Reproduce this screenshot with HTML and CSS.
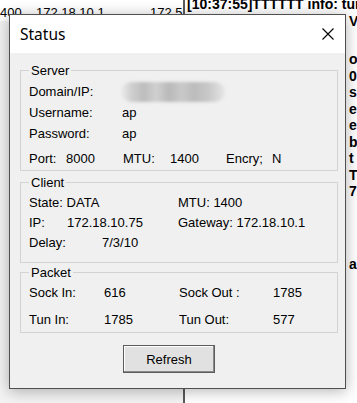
FILE: index.html
```html
<!DOCTYPE html>
<html lang="en">
  <head>
    <meta charset="UTF-8" />
    <title>Status</title>
    <link rel="stylesheet" href="styles.css">
  </head>
  <body>
    <div class="desktop">
      <div class="list-pane">
        <div class="list-row">
          <span class="col-mtu">400</span>
          <span class="col-gw">172.18.10.1</span>
          <span class="col-ip">172.5</span>
        </div>
      </div>

      <div class="log-pane">
        <div class="log-line">[10:37:55]TTTTTT info: tunnel up</div>
        <div class="log-line"><span class="log-text">[10:50:24]: connect</span><span class="log-end">V</span></div>
        <div class="log-line gap-top"><span class="log-text"></span><span class="log-end">&nbsp;</span></div>
        <div class="log-line"><span class="log-text"></span><span class="log-end">o</span></div>
        <div class="log-line"><span class="log-text"></span><span class="log-end">0</span></div>
        <div class="log-line"><span class="log-text"></span><span class="log-end">s</span></div>
        <div class="log-line"><span class="log-text"></span><span class="log-end">e</span></div>
        <div class="log-line"><span class="log-text"></span><span class="log-end">e</span></div>
        <div class="log-line"><span class="log-text"></span><span class="log-end">b</span></div>
        <div class="log-line"><span class="log-text"></span><span class="log-end">t</span></div>
        <div class="log-line"><span class="log-text"></span><span class="log-end">T</span></div>
        <div class="log-line"><span class="log-text"></span><span class="log-end">7</span></div>
        <div class="log-line gap-bottom"><span class="log-text"></span><span class="log-end">&nbsp;</span></div>
        <div class="log-line"><span class="log-text"></span><span class="log-end">&nbsp;</span></div>
        <div class="log-line"><span class="log-text"></span><span class="log-end">&nbsp;</span></div>
        <div class="log-line"><span class="log-text"></span><span class="log-end">a</span></div>
      </div>

      <div class="dialog">
        <div class="title-bar">
          <span class="title">Status</span>
          <svg class="close" width="12" height="12" viewBox="0 0 12 12">
            <path d="M0.5 0.5 L11.5 11.5 M11.5 0.5 L0.5 11.5" stroke="#000" stroke-width="1.1" fill="none" />
          </svg>
        </div>

        <div class="dialog-body">
          <fieldset class="group server">
            <legend>Server</legend>
            <div class="row r1">
              <span class="key">Domain/IP:</span>
              <span class="blurred"></span>
            </div>
            <div class="row r2">
              <span class="key">Username:</span>
              <span>ap</span>
            </div>
            <div class="row r3">
              <span class="key">Password:</span>
              <span>ap</span>
            </div>
            <div class="row r4">
              <span class="port-key">Port:</span>
              <span class="port-val">8000</span>
              <span class="mtu-key">MTU:</span>
              <span class="mtu-val">1400</span>
              <span class="enc-key">Encry;</span>
              <span>N</span>
            </div>
          </fieldset>

          <fieldset class="group client">
            <legend>Client</legend>
            <div class="row c1">
              <span class="half">State: DATA</span>
              <span>MTU: 1400</span>
            </div>
            <div class="row c2">
              <span class="half"><span class="ip-key">IP:</span>172.18.10.75</span>
              <span>Gateway: 172.18.10.1</span>
            </div>
            <div class="row c3">
              <span class="delay-key">Delay:</span>
              <span>7/3/10</span>
            </div>
          </fieldset>

          <fieldset class="group packet">
            <legend>Packet</legend>
            <div class="row p1">
              <span class="pk-key">Sock In:</span>
              <span class="pk-val">616</span>
              <span class="pk-key2">Sock Out :</span>
              <span>1785</span>
            </div>
            <div class="row p2">
              <span class="pk-key">Tun In:</span>
              <span class="pk-val">1785</span>
              <span class="pk-key2">Tun Out:</span>
              <span>577</span>
            </div>
          </fieldset>

          <div class="actions">
            <button class="refresh-btn">Refresh</button>
          </div>
        </div>
      </div>
    </div>
  </body>
</html>
```

FILE: styles.css
```css
html,
body {
  margin: 0;
  padding: 0;
}

body {
  width: 357px;
  height: 403px;
  overflow: hidden;
  font-family: "Liberation Sans", Arial, sans-serif;
  font-size: 13px;
  color: #000;
}

.desktop {
  position: relative;
  display: flex;
  width: 357px;
  height: 403px;
  background: #f0f0f0;
}

/* background window: list on the left */
.list-pane {
  width: 183px;
  background: #f3f3f3;
}

.list-row {
  display: flex;
  height: 16px;
  line-height: 16px;
  padding-top: 5px;
  background: #fff;
  white-space: nowrap;
  overflow: hidden;
}

.col-mtu {
  width: 36px;
}

.col-gw {
  width: 114px;
}

/* background window: log text on the right */
.log-pane {
  flex: 1;
  border-left: 2px solid #5a5a5a;
  background: #fff;
  padding-left: 2px;
  overflow: hidden;
  font-weight: bold;
  font-size: 14px;
}

.log-line {
  display: flex;
  height: 16.5px;
  line-height: 16.5px;
  white-space: nowrap;
  overflow: hidden;
}

.log-line:first-child {
  margin-top: -4px;
}

.log-line.gap-top {
  height: 22px;
}

.log-line.gap-bottom {
  height: 23px;
}

.log-text {
  width: 162px;
  flex-shrink: 0;
  overflow: hidden;
}

/* the dialog window */
.dialog {
  position: absolute;
  left: 9px;
  top: 14px;
  width: 335px;
  height: 373px;
  border: 1px solid #4f4f4f;
  background: #f0f0f0;
  box-shadow: 0 2px 14px rgba(0, 0, 0, 0.3);
  display: flex;
  flex-direction: column;
}

.title-bar {
  height: 38px;
  background: #fff;
  display: flex;
  align-items: center;
  justify-content: space-between;
  padding: 0 11px 0 10px;
}

.title {
  font-family: "Noto Sans", sans-serif;
  font-size: 15.5px;
  padding-bottom: 1px;
}

.close {
  display: block;
}

.dialog-body {
  padding: 0 7px 0 10px;
}

.group {
  margin: 0;
  padding: 0 8px;
  border: 1px solid #d3d3d3;
  min-width: 0;
}

.group legend {
  padding: 0 2px;
  line-height: 15px;
}

.row {
  display: flex;
  align-items: center;
  white-space: nowrap;
}

.key {
  width: 93px;
}

.blurred {
  width: 104px;
  height: 20px;
  margin-left: -1px;
  border-radius: 10px;
  background: linear-gradient(90deg, #ececec 0%, #cfcfcf 10%, #bdbdbd 22%, #d0d0d0 34%, #b9b9b9 46%, #c9c9c9 58%, #bcbcbc 70%, #c8c8c8 84%, #e6e6e6 100%);
  filter: blur(1.5px);
}

/* server group */
.server {
  margin-top: 10px;
  padding-top: 3px;
  padding-bottom: 1px;
}

.server .r1,
.server .r2 {
  height: 21px;
}

.server .r3 {
  height: 20px;
}

.server .r4 {
  height: 22px;
  margin-top: 4px;
}

.port-key {
  width: 37px;
}

.port-val {
  width: 57px;
}

.mtu-key {
  width: 47px;
}

.mtu-val {
  width: 56px;
}

.enc-key {
  width: 46px;
}

/* client group */
.client {
  margin-top: 4px;
  padding-top: 2px;
  padding-bottom: 10px;
}

.client .row {
  height: 20px;
}

.half {
  width: 149px;
}

.ip-key {
  display: inline-block;
  width: 38px;
}

.delay-key {
  width: 73px;
}

/* packet group */
.packet {
  margin-top: 2px;
  padding-top: 2px;
  padding-bottom: 3px;
}

.packet .p1 {
  height: 20px;
}

.packet .p2 {
  height: 20px;
  margin-top: 7px;
}

.pk-key {
  width: 75px;
}

.pk-val {
  width: 75px;
}

.pk-key2 {
  width: 94px;
}

.actions {
  display: flex;
  margin-top: 12px;
}

.refresh-btn {
  margin-left: 103px;
  width: 92px;
  height: 28px;
  padding: 0;
  font-family: "Liberation Sans", Arial, sans-serif;
  font-size: 13px;
  color: #000;
  background: #e1e1e1;
  border: 1px solid #5c5c5c;
  box-shadow: inset -1px -1px 0 #8a8a8a, inset 1px 1px 0 #fdfdfd;
}
```
